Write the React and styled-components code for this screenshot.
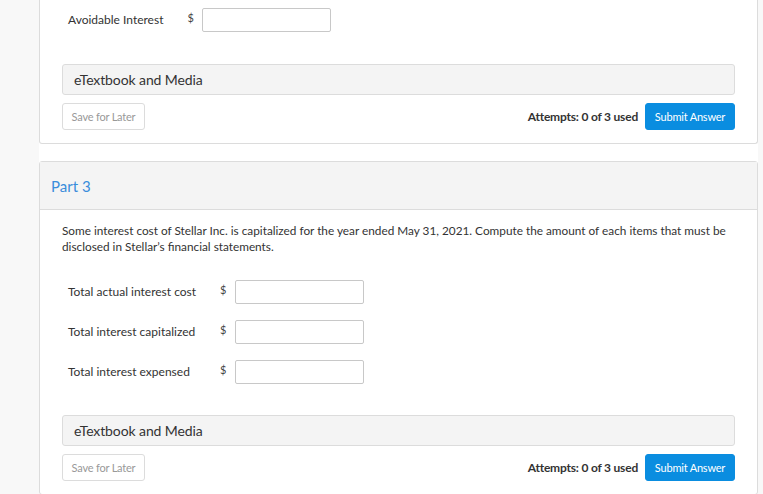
import React from 'react';
import styled, { createGlobalStyle } from 'styled-components';

const GlobalStyle = createGlobalStyle`
  html, body {
    margin: 0;
    padding: 0;
    background: #f8f8f8;
    font-family: Lato, "Open Sans", sans-serif;
    color: #333;
  }
`;

const Page = styled.div`
  margin-left: 39px;
  width: 719px;
  background: #fff;
  padding-bottom: 40px;
  display: flex;
  flex-direction: column;
  gap: 17px;
`;

const Card = styled.section`
  border: 1px solid #dcdcdc;
  border-top: ${(p) => (p.$cut ? 'none' : '1px solid #dcdcdc')};
  border-radius: ${(p) => (p.$cut ? '0 0 3px 3px' : '3px')};
  background: #fff;
`;

const Header = styled.div`
  height: 47px;
  display: flex;
  align-items: center;
  padding-left: 11px;
  background: #f4f4f4;
  border-bottom: 1px solid #dcdcdc;
  color: #3a8ddb;
  font-size: 15px;
`;

const Body = styled.div`
  padding: ${(p) => (p.$cut ? '8px' : '13px')} 22px 13px 22px;
`;

const Prompt = styled.p`
  margin: 0 0 25px;
  font-size: 11.8px;
  line-height: 16px;
  color: #333;
`;

const Fields = styled.div`
  display: grid;
  grid-template-columns: auto auto auto;
  justify-content: start;
  row-gap: 16px;
  padding-left: 6px;
  margin-bottom: ${(p) => (p.$cut ? '32px' : '31px')};
`;

const Label = styled.div`
  font-size: 12px;
  line-height: 24px;
  padding-right: 24px;
  color: #333;
`;

const Dollar = styled.div`
  font-size: 11px;
  line-height: 20px;
  padding-right: 8px;
  color: #444;
`;

const Input = styled.input`
  box-sizing: border-box;
  width: 129px;
  height: 24px;
  border: 1px solid #c8c8c8;
  border-radius: 2px;
  background: #fff;
`;

const MediaBar = styled.div`
  box-sizing: border-box;
  height: 31px;
  display: flex;
  align-items: center;
  padding-left: 11px;
  background: #f4f4f4;
  border: 1px solid #dcdcdc;
  border-radius: 3px;
  font-size: 14px;
  color: #333;
  letter-spacing: -0.1px;
`;

const Actions = styled.div`
  margin-top: 8px;
  display: flex;
  align-items: center;
  gap: 7px;
`;

const Button = styled.button`
  box-sizing: border-box;
  height: 27px;
  border-radius: 3px;
  font-family: Lato, sans-serif;
  font-size: 11px;
  letter-spacing: -0.2px;
  padding: 0;
  width: ${(p) => (p.$primary ? '90px' : '83px')};
  border: 1px solid ${(p) => (p.$primary ? '#0a8de0' : '#dcdcdc')};
  background: ${(p) => (p.$primary ? '#0a8de0' : '#fff')};
  color: ${(p) => (p.$primary ? '#fff' : '#999')};
`;

const Attempts = styled.span`
  margin-left: auto;
  font-size: 12px;
  font-weight: 700;
  color: #333;
  letter-spacing: -0.2px;
`;

function Question({ cut, title, prompt, fields }) {
  return (
    <Card $cut={cut}>
      {title && <Header>{title}</Header>}
      <Body $cut={cut}>
        {prompt && <Prompt>{prompt}</Prompt>}
        <Fields $cut={cut}>
          {fields.map((f) => (
            <React.Fragment key={f}>
              <Label>{f}</Label>
              <Dollar>$</Dollar>
              <Input type="text" />
            </React.Fragment>
          ))}
        </Fields>
        <MediaBar>eTextbook and Media</MediaBar>
        <Actions>
          <Button>Save for Later</Button>
          <Attempts>Attempts: 0 of 3 used</Attempts>
          <Button $primary>Submit Answer</Button>
        </Actions>
      </Body>
    </Card>
  );
}

export default function App() {
  return (
    <>
      <GlobalStyle />
      <Page>
        <Question cut fields={['Avoidable Interest']} />
        <Question
          title="Part 3"
          prompt="Some interest cost of Stellar Inc. is capitalized for the year ended May 31, 2021. Compute the amount of each items that must be disclosed in Stellar’s financial statements."
          fields={[
            'Total actual interest cost',
            'Total interest capitalized',
            'Total interest expensed',
          ]}
        />
      </Page>
    </>
  );
}
